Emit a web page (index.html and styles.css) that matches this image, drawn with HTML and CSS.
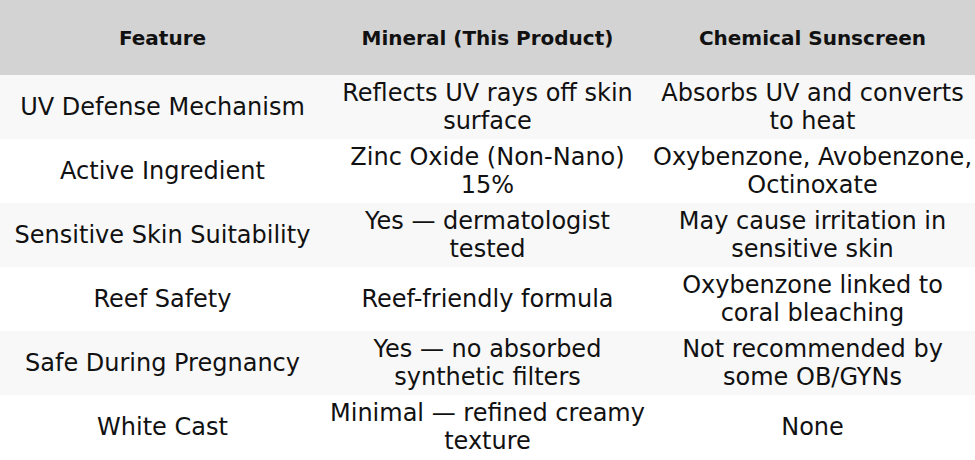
FILE: index.html
```html
<!DOCTYPE html>
<html>
<head>
<meta charset="utf-8">
<link rel="stylesheet" href="styles.css">
</head>
<body>
<table class="compare">
  <thead>
    <tr><th>Feature</th><th>Mineral (This Product)</th><th>Chemical Sunscreen</th></tr>
  </thead>
  <tbody>
    <tr><td>UV Defense Mechanism</td><td>Reflects UV rays off skin surface</td><td>Absorbs UV and converts to heat</td></tr>
    <tr><td>Active Ingredient</td><td>Zinc Oxide (Non-Nano) 15%</td><td>Oxybenzone, Avobenzone, Octinoxate</td></tr>
    <tr><td>Sensitive Skin Suitability</td><td>Yes — dermatologist tested</td><td>May cause irritation in sensitive skin</td></tr>
    <tr><td>Reef Safety</td><td>Reef-friendly formula</td><td>Oxybenzone linked to coral bleaching</td></tr>
    <tr><td>Safe During Pregnancy</td><td>Yes — no absorbed synthetic filters</td><td>Not recommended by some OB/GYNs</td></tr>
    <tr><td>White Cast</td><td>Minimal — refined creamy texture</td><td>None</td></tr>
  </tbody>
</table>
</body>
</html>
```
FILE: styles.css
```css
html, body {
  margin: 0;
  padding: 0;
  background: #ffffff;
}
body {
  font-family: "DejaVu Sans", sans-serif;
  color: #111111;
}
.compare {
  width: 975px;
  border-collapse: collapse;
  table-layout: fixed;
}
.compare th {
  background: #d3d3d3;
  font-size: 20px;
  font-weight: bold;
  height: 75px;
  padding: 0 2px;
  text-align: center;
  vertical-align: middle;
}
.compare td {
  font-size: 24px;
  line-height: 28px;
  height: 64px;
  padding: 0 1px;
  text-align: center;
  vertical-align: middle;
  box-sizing: border-box;
}
.compare tbody tr:nth-child(odd) {
  background: #f8f8f8;
}
.compare tbody tr:nth-child(even) {
  background: #ffffff;
}
```
